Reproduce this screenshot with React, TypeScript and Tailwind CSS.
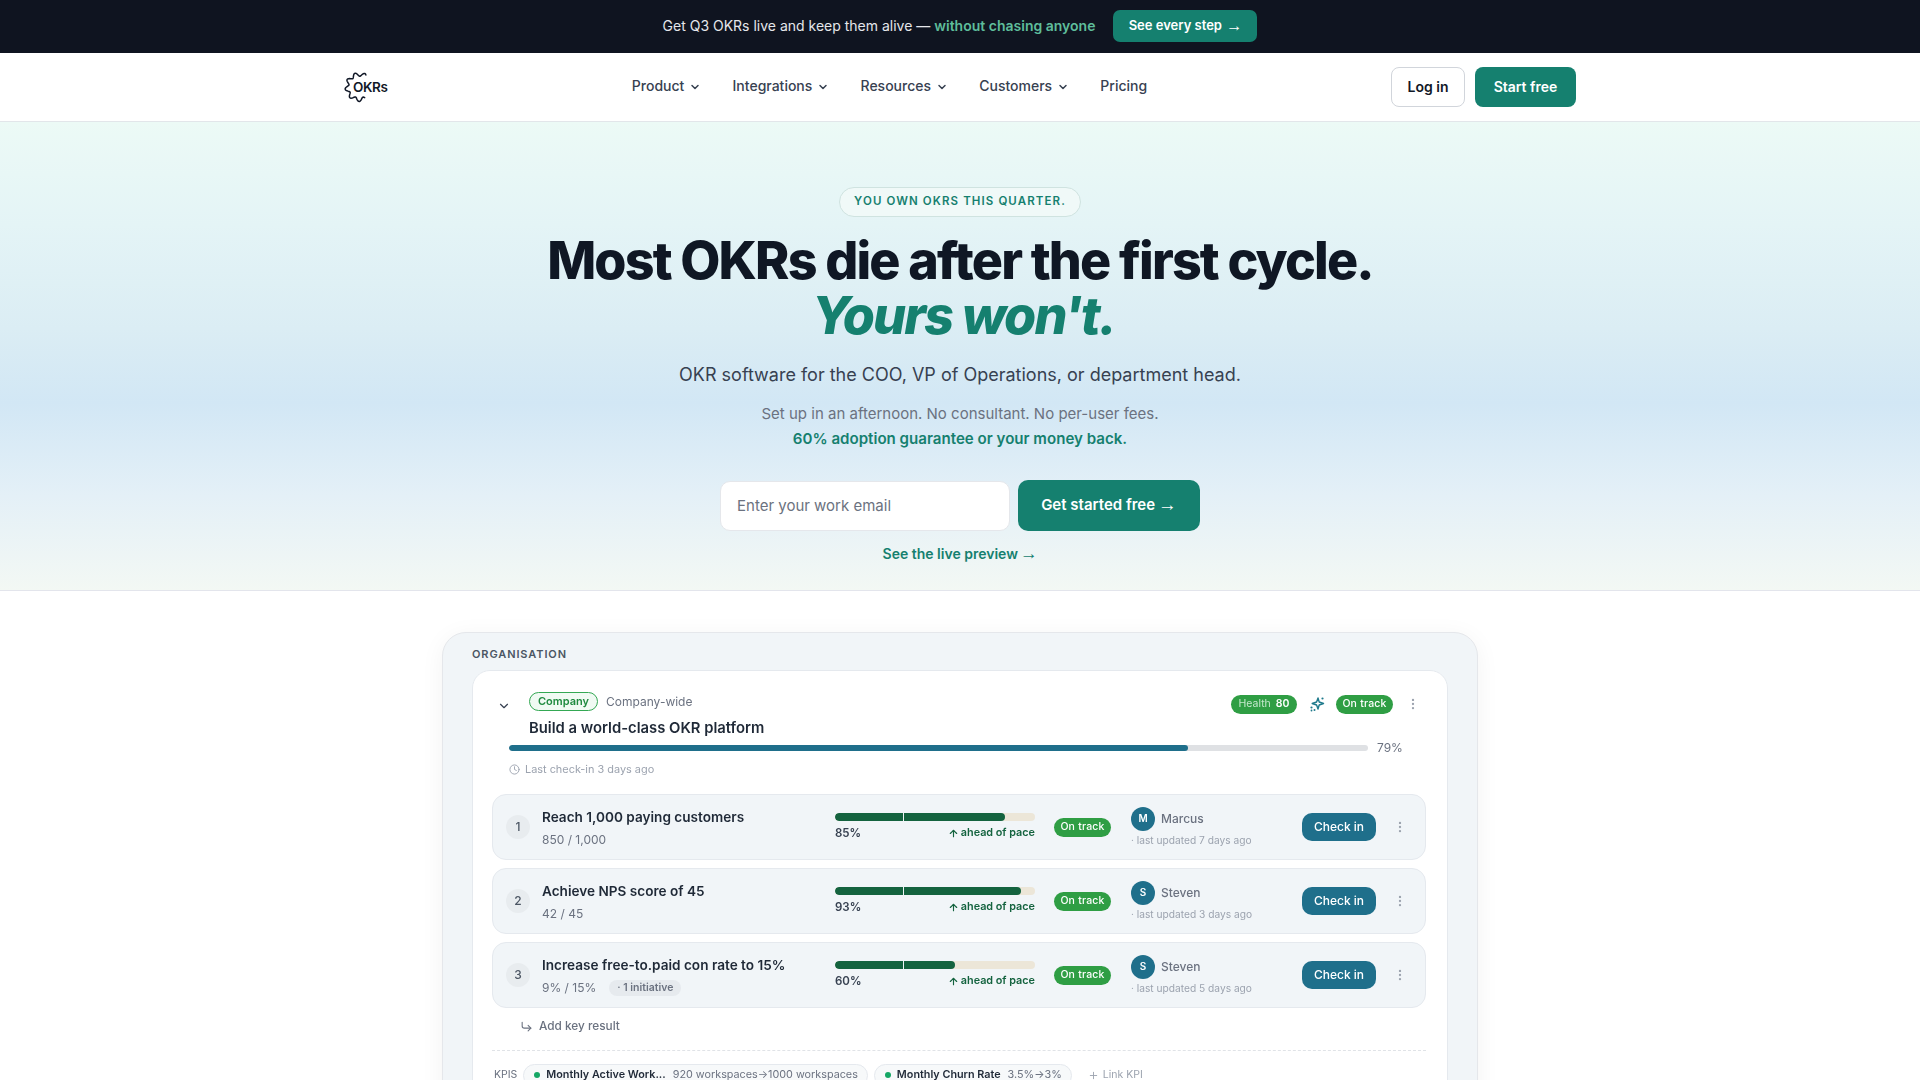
import { ChevronDown, Clock, MoreVertical, Plus, CornerDownRight, ArrowUp } from "lucide-react";

const NAV_LINKS = ["Product", "Integrations", "Resources", "Customers"];

const KEY_RESULTS = [
  { n: 1, title: "Reach 1,000 paying customers", value: "850 / 1,000", pct: 85, owner: "Marcus", updated: "7 days ago" },
  { n: 2, title: "Achieve NPS score of 45", value: "42 / 45", pct: 93, owner: "Steven", updated: "3 days ago" },
  { n: 3, title: "Increase free-to.paid con rate to 15%", value: "9% / 15%", pct: 60, owner: "Steven", updated: "5 days ago", initiative: true },
];

// wavy open gear outline for the logo
function gearPath() {
  const pts: string[] = [];
  for (let deg = -62; deg >= -298; deg -= 3) {
    const a = (deg * Math.PI) / 180;
    const r = 12.6 + 1.9 * Math.cos((a - 0.2) * 9);
    pts.push(`${(15.5 + r * Math.cos(a)).toFixed(2)} ${(16 + r * Math.sin(a)).toFixed(2)}`);
  }
  return "M" + pts.join("L");
}

function Arrow() {
  return <span className="font-['Liberation_Sans',sans-serif] font-normal text-[1.25em] leading-none">→</span>;
}

function Logo() {
  return (
    <div className="relative w-[44px] h-[32px] shrink-0">
      <svg width="32" height="32" viewBox="0 0 32 32" fill="none" className="absolute left-0 top-0">
        <path d={gearPath()} stroke="#111827" strokeWidth="1.5" strokeLinejoin="round" strokeLinecap="round" />
      </svg>
      <span className="absolute left-[9px] top-[8px] text-[13.5px] leading-4 font-semibold text-[#111827] tracking-[-0.4px]">OKRs</span>
    </div>
  );
}

function OnTrack() {
  return (
    <span className="h-[19px] w-[57px] rounded-full bg-[#2f9e44] text-white text-[10.5px] font-medium flex items-center justify-center tracking-[0.2px]">
      On track
    </span>
  );
}

function KeyResultRow({ kr }: { kr: (typeof KEY_RESULTS)[number] }) {
  return (
    <div className="h-[66px] rounded-[14px] border border-[#e5e9ee] bg-[#f1f5f8] flex items-center pl-[13px]">
      <span className="w-6 h-6 rounded-full bg-[#e8ecef] text-[#4b5563] text-[12px] font-medium flex items-center justify-center shrink-0">
        {kr.n}
      </span>
      <div className="ml-3 w-[293px] shrink-0">
        <div className="text-[13.6px] leading-5 font-semibold text-[#1f2937]">{kr.title}</div>
        <div className="mt-[5px] flex items-center gap-[13px] text-[12px] leading-4 text-[#6b7280]">
          {kr.value}
          {kr.initiative && (
            <span className="h-4 px-2 rounded-full bg-[#e6eaee] text-[10.5px] font-semibold text-[#6b7280] flex items-center">
              · 1 initiative
            </span>
          )}
        </div>
      </div>
      <div className="w-[200px] shrink-0">
        <div className="relative h-2 rounded-full bg-[#ece6d8] overflow-hidden">
          <div className="h-full rounded-full bg-[#14633f]" style={{ width: `${kr.pct}%` }} />
          <span className="absolute left-[68px] top-0 h-full w-px bg-[#f1f5f8]" />
        </div>
        <div className="mt-1 flex items-center justify-between text-[11px] leading-4 font-semibold">
          <span className="text-[11.5px] text-[#374151]">{kr.pct}%</span>
          <span className="flex items-center gap-[2px] text-[10.8px] text-[#14633f]">
            <ArrowUp size={11} strokeWidth={2.5} />
            ahead of pace
          </span>
        </div>
      </div>
      <div className="ml-[19px] shrink-0">
        <OnTrack />
      </div>
      <div className="ml-[20px] w-[171px] shrink-0">
        <div className="flex items-center gap-[6px]">
          <span className="w-6 h-6 rounded-full bg-[#1f6f8b] text-white text-[10px] font-semibold flex items-center justify-center">
            {kr.owner[0]}
          </span>
          <span className="text-[12px] font-medium text-[#6b7280]">{kr.owner}</span>
        </div>
        <div className="mt-[1px] text-[10.2px] leading-4 text-[#9ca3af]">· last updated {kr.updated}</div>
      </div>
      <button className="h-[28px] w-[74px] rounded-[10px] bg-[#1f6f8b] text-white text-[12px] font-medium shrink-0">
        Check in
      </button>
      <MoreVertical size={14} className="ml-[17px] text-[#9ca3af]" />
    </div>
  );
}

function Sparkle() {
  return (
    <svg width="16" height="16" viewBox="0 0 16 16" fill="none" className="text-[#1f7a8c]">
      <path d="M9 2 10.2 6 14.5 7.5 10.2 9 9 13 7.6 9 3.2 7.5 7.6 6z" stroke="currentColor" strokeWidth="1.4" strokeLinejoin="round" />
      <circle cx="13.5" cy="2.5" r="1.1" fill="currentColor" />
      <circle cx="2.5" cy="11.5" r="1.1" fill="currentColor" />
      <circle cx="5.5" cy="14" r="1" fill="currentColor" />
      <circle cx="2.5" cy="14.5" r="0.9" fill="currentColor" />
    </svg>
  );
}

export default function App() {
  return (
    <div className="h-[1080px] overflow-hidden bg-white font-['Inter',sans-serif] text-[#111827]">
      <div className="h-[53px] pb-[2px] bg-[#0f1420] flex items-center justify-center gap-[18px] text-[14px]">
        <p className="text-[#e5e7eb]">
          Get Q3 OKRs live and keep them alive — <span className="text-[#5ebd9b] font-semibold">without chasing anyone</span>
        </p>
        <a className="h-8 w-[144px] rounded-[7px] bg-[#15806f] text-white text-[13px] font-semibold flex items-center justify-center gap-[4px]">
          See every step <Arrow />
        </a>
      </div>

      <header className="h-[69px] border-b border-[#e2e6ea] bg-white">
        <div className="max-w-[1280px] h-full mx-auto px-6 flex items-center justify-between">
          <Logo />
          <nav className="flex items-center gap-[31.2px] pb-[3px] text-[14px] font-medium text-[#374151]">
            {NAV_LINKS.map((l) => (
              <a key={l} className="flex items-center gap-[5px]">
                {l}
                <ChevronDown size={12} strokeWidth={3} className="mt-[3px]" />
              </a>
            ))}
            <a>Pricing</a>
          </nav>
          <div className="flex items-center gap-[10px]">
            <a className="h-10 w-[74px] pb-[2px] rounded-lg border border-[#d1d5db] bg-white text-[14px] font-semibold text-[#111827] flex items-center justify-center">
              Log in
            </a>
            <a className="h-10 w-[101px] pb-[2px] rounded-lg bg-[#15806f] text-[14px] font-semibold text-white flex items-center justify-center">
              Start free
            </a>
          </div>
        </div>
      </header>

      <section className="h-[469px] border-b border-[#e3e5ec] bg-[linear-gradient(180deg,#ecfaf6_0%,#e4f4f6_22%,#dbedf4_44%,#d2e7f5_60%,#e4f0f7_80%,#f3f8f4_100%)] pt-[65px] flex flex-col items-center">
        <span className="h-[30px] px-[14px] rounded-full border border-[#cfe3e0] bg-[#f0f9f8] text-[11.5px] font-semibold tracking-[1.1px] text-[#15806f] flex items-center">
          YOU OWN OKRS THIS QUARTER.
        </span>
        <h1 className="mt-[16px] text-[52px] leading-[55px] font-extrabold tracking-[-1.85px] text-[#0f1724] text-center">
          Most OKRs die after the first cycle.
          <br />
          <em className="inline-block pl-[7px] text-[#15806f]">Yours won't.</em>
        </h1>
        <p className="mt-[18px] text-[18px] leading-7 text-[#374151]">OKR software for the COO, VP of Operations, or department head.</p>
        <p className="mt-[13px] text-[15px] leading-6 text-[#6b7280]">Set up in an afternoon. No consultant. No per-user fees.</p>
        <p className="mt-[1px] text-[15.1px] leading-6 font-semibold text-[#15806f]">60% adoption guarantee or your money back.</p>
        <div className="mt-[29px] flex items-center gap-2">
          <input
            placeholder="Enter your work email"
            className="w-[290px] h-[50px] rounded-[10px] border border-[#e5e7eb] bg-white px-4 text-[15px] placeholder:text-[#6b7280] outline-none"
          />
          <a className="w-[182px] h-[51px] pb-[1px] rounded-[10px] bg-[#15806f] text-white text-[15px] font-semibold flex items-center justify-center gap-[3px]">
            Get started free <Arrow />
          </a>
        </div>
        <a className="mt-[13px] flex items-center gap-[2px] text-[14px] leading-5 font-semibold text-[#15806f]">
          See the live preview <Arrow />
        </a>
      </section>

      <div className="pt-[41px] flex justify-center">
        <div className="w-[1036px] rounded-t-[24px] border border-[#e5e7eb] bg-[#f1f5f8] pt-[13px] px-[29px] shadow-[0_4px_24px_rgba(15,23,42,0.05)]">
          <div className="text-[11px] leading-4 font-semibold tracking-[0.9px] text-[#4b5563]">ORGANISATION</div>
          <div className="mt-[8px] rounded-t-[18px] border border-[#e5e9ee] bg-white pl-[19px] pr-[21px] pt-[21px] pb-6 blur-[0.3px]">
            <div className="flex items-start">
              <ChevronDown size={14} className="ml-[5px] mt-[7px] text-[#374151]" />
              <div className="ml-[18px] flex-1">
                <div className="flex items-center gap-2 h-[19px]">
                  <span className="h-[19px] px-2 rounded-full border border-[#34a853] bg-[#f0faf3] text-[11px] font-semibold text-[#1f8a3f] flex items-center">
                    Company
                  </span>
                  <span className="text-[12px] text-[#6b7280]">Company-wide</span>
                </div>
                <div className="mt-[7px] text-[14.8px] leading-5 font-semibold text-[#1f2937]">Build a world-class OKR platform</div>
              </div>
              <div className="flex items-center h-[26px] mt-[-1px]">
                <span className="h-[19px] w-[66px] rounded-full bg-[#2f9e44] text-[10.5px] flex items-center justify-center gap-[5px]">
                  <span className="text-[#c5e8cd]">Health</span>
                  <span className="font-semibold text-white">80</span>
                </span>
                <span className="mx-[11.5px]"><Sparkle /></span>
                <OnTrack />
                <MoreVertical size={14} className="ml-[13px] mr-[6px] text-[#9ca3af]" />
              </div>
            </div>
            <div className="mt-[1px] ml-[17px] flex items-center">
              <div className="w-[859px] h-[6px] rounded-full bg-[#dfe1e4] overflow-hidden">
                <div className="h-full w-[79%] rounded-full bg-[#1f6f8b]" />
              </div>
              <span className="ml-[9px] text-[12px] text-[#6b7280]">79%</span>
            </div>
            <div className="mt-[4px] ml-[17px] flex items-center gap-[5px] text-[10.9px] leading-4 text-[#9ca3af]">
              <Clock size={11} />
              Last check-in 3 days ago
            </div>
            <div className="mt-[17px] flex flex-col gap-2">
              {KEY_RESULTS.map((kr) => (
                <KeyResultRow key={kr.n} kr={kr} />
              ))}
            </div>
            <div className="mt-[10px] ml-7 flex items-center gap-[6px] text-[11.8px] leading-4 font-medium text-[#6b7280]">
              <CornerDownRight size={13} />
              Add key result
            </div>
            <div className="mt-[16px] border-t border-dashed border-[#e0e3e7]" />
            <div className="mt-[13px] flex items-center text-[10.5px] h-[22px]">
              <span className="ml-[2px] text-[#6b7280] mr-[6px]">KPIS</span>
              <span className="h-[23px] pl-[10px] pr-[9px] rounded-full border border-[#e5e9ee] bg-[#f7f9fa] flex items-center gap-[6px] text-[10.8px]">
                <span className="w-[6px] h-[6px] rounded-full bg-[#16a765]" />
                <span className="font-semibold text-[#1f2937]">Monthly Active Work...</span>
                <span className="ml-[1px] text-[#6b7280]">920 workspaces→1000 workspaces</span>
              </span>
              <span className="ml-[6px] h-[23px] pl-[10px] pr-[9px] rounded-full border border-[#e5e9ee] bg-[#f7f9fa] flex items-center gap-[6px] text-[10.8px]">
                <span className="w-[6px] h-[6px] rounded-full bg-[#16a765]" />
                <span className="font-semibold text-[#1f2937]">Monthly Churn Rate</span>
                <span className="ml-[1px] text-[#6b7280]">3.5%→3%</span>
              </span>
              <span className="ml-4 flex items-center gap-1 text-[#9ca3af]">
                <Plus size={11} />
                Link KPI
              </span>
            </div>
          </div>
        </div>
      </div>
    </div>
  );
}
